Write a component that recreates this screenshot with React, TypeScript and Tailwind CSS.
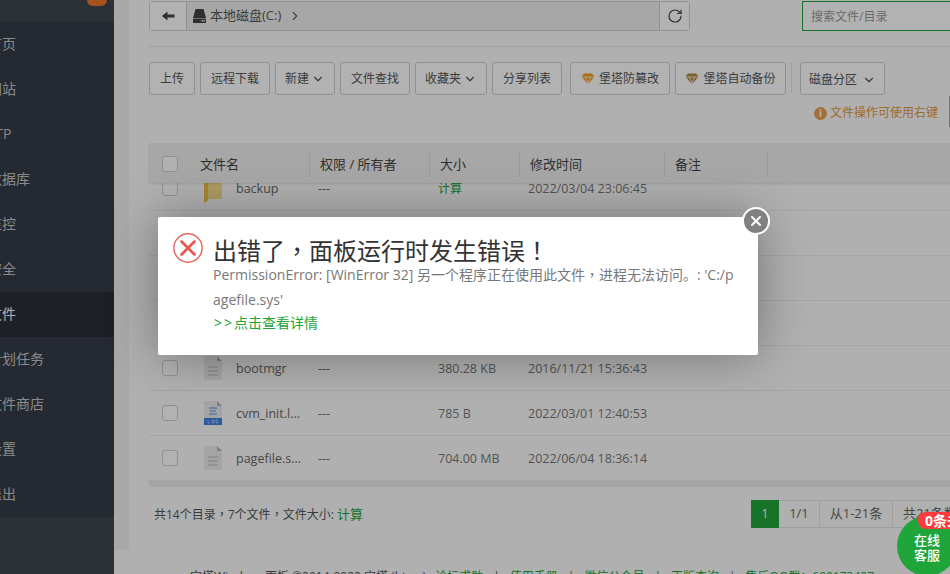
import React from "react";
import { ChevronDown, ChevronRight, RotateCw, X } from "lucide-react";

const font = "font-['Open_Sans','Noto_Sans_CJK_SC',sans-serif]";

const navItems = ["首页", "网站", "FTP", "数据库", "监控", "安全", "文件", "计划任务", "文件商店", "设置", "退出"];

function Btn({ children, className = "" }: { children: React.ReactNode; className?: string }) {
  return (
    <button className={`h-[33px] flex items-center justify-center shrink-0 border border-[#cfcfcf] rounded-[3px] bg-white text-[12px] text-[#555] ${className}`}>
      {children}
    </button>
  );
}

function Diamond({ color }: { color: string }) {
  return (
    <svg width="14" height="12" viewBox="0 0 14 12" className="mr-[4px] shrink-0">
      <path d="M3 0.5H11L13.5 3.5L7 11.5L0.5 3.5Z" fill={color} />
      <path d="M0.5 4H13.5M4.5 4L7 11M9.5 4L7 11" stroke="#fff" strokeWidth="0.8" fill="none" />
    </svg>
  );
}

function Folder() {
  return (
    <svg width="18" height="28" viewBox="0 0 18 28" className="overflow-visible">
      <path d="M4 0.5H18V23H4Z" fill="#fadf8c" />
      <path d="M0 5L4 3V23L4 24.5L0 27Z" fill="#eec14a" />
    </svg>
  );
}

function Doc() {
  return (
    <svg width="18" height="24" viewBox="0 0 18 24">
      <path d="M0 0H13L18 5V24H0Z" fill="#ebebeb" />
      <path d="M13 0L18 5H13Z" fill="#b5b5b5" />
      <path d="M4 11H14M4 15H14M4 19H14" stroke="#c9c9c9" strokeWidth="1.5" />
    </svg>
  );
}

function LogFile() {
  return (
    <svg width="18" height="24" viewBox="0 0 18 24">
      <path d="M0 0H13L18 5V24H0Z" fill="#ebebeb" />
      <path d="M13 0L18 5H13Z" fill="#b5b5b5" />
      <path d="M5 7H13M6 10H12M5 13H13" stroke="#5b8fe0" strokeWidth="1.2" />
      <rect x="0" y="17" width="18" height="7" fill="#3f7fe0" />
      <path d="M4 19V22H6M8 19H10V22H8ZM14 19H12V22H14V20.5" stroke="#cfe0ff" strokeWidth="0.6" fill="none" />
    </svg>
  );
}

function Row({ icon, name, size, date, sizeGreen }: { icon?: React.ReactNode; name?: string; size?: string; date?: string; sizeGreen?: boolean }) {
  return (
    <div className="h-[45px] shrink-0 flex items-center border-b border-[#ededed] text-[12.5px] text-[#777]">
      <div className="w-[16px] h-[16px] ml-[13px] rounded-[3px] border border-[#cfcfcf] bg-white" />
      <div className="w-[18px] ml-[26px] h-[24px] shrink-0">{icon}</div>
      <div className="w-[82px] ml-[14px] pt-[2px] text-[#666] whitespace-nowrap">{name}</div>
      <div className="w-[120px] pt-[2px] text-[#666]">{name ? "---" : ""}</div>
      <div className={`w-[90px] pt-[2px] ${sizeGreen ? "text-[#20a53a] text-[12px]" : "text-[#777]"}`}>{size}</div>
      <div className="w-[200px] pt-[2px] text-[#777]">{date}</div>
    </div>
  );
}

function HeadCell({ label, width }: { label: string; width: string }) {
  return (
    <div className={`${width} h-[25px] flex items-center shrink-0 text-[13px] text-[#444] border-r border-[#dcdcdc]`}>
      <span className="pl-[10px]">{label}</span>
    </div>
  );
}

function Comma() {
  return <span className="font-['Noto_Sans_CJK_TC']">，</span>;
}

function Sep() {
  return <span className="mx-[10px] text-[#555]">|</span>;
}

export default function App() {
  return (
    <div className={`relative w-[950px] h-[574px] overflow-hidden flex bg-[#fdfdfd] ${font}`}>
      {/* Sidebar */}
      <aside className="w-[114px] h-full shrink-0 flex flex-col bg-[#3f4550] overflow-hidden">
        <div className="h-[22px] shrink-0 relative">
          <div className="absolute left-[-2px] top-[-20px] text-[16px] font-semibold text-[#dddddd] whitespace-nowrap">Windows面板</div>
          <div className="absolute left-[87px] top-[-6px] w-[20px] h-[12px] rounded-b-[6px] bg-[#f0742a]" />
        </div>
        <nav className="flex flex-col">
          {navItems.map((n) => (
            <div
              key={n}
              className={`h-[45px] pb-[2px] flex items-center text-[14px] whitespace-nowrap ${n === "文件" ? "bg-[#2b2f36] text-white" : "bg-[#353b47] text-[#c6c6c6]"}`}
            >
              <span className="ml-[-12px]">{n}</span>
            </div>
          ))}
        </nav>
      </aside>

      {/* Main */}
      <div className="flex-1 min-w-0 flex flex-col">
        <div className="h-[550px] shrink-0 pl-[15px] bg-[#f2f2f2]">
          <div className="h-full bg-[#fdfdfd] pl-[20px] pt-[1px] overflow-hidden">
            {/* path bar */}
            <div className="flex h-[30px] w-[900px]">
              <div className="w-[541px] flex border border-[#d2d2d2] rounded-[3px] overflow-hidden">
                <div className="w-[37px] flex items-center justify-center border-r border-[#d2d2d2] bg-white">
                  <svg width="13" height="10" viewBox="0 0 13 10"><path d="M0 5L5.5 0.5V3.5H12.5V6.5H5.5V9.5Z" fill="#444" /></svg>
                </div>
                <div className="flex-1 flex items-center bg-[#f0f0f0] pl-[6px] text-[13px] text-[#555]">
                  <svg width="13" height="14" viewBox="0 0 13 14" className="mr-[4px]">
                    <path d="M2.5 0H10.5L13 9H0Z" fill="#444" />
                    <rect y="9.5" width="13" height="4.5" rx="0.5" fill="#444" />
                    <rect x="8.5" y="11" width="1.5" height="1.5" fill="#eee" />
                    <rect x="10.5" y="11" width="1.5" height="1.5" fill="#eee" />
                  </svg>
                  <span>本地磁盘(C:)</span>
                  <ChevronRight size={14} strokeWidth={2.2} className="ml-[7px] text-[#666]" />
                </div>
                <div className="w-[30px] flex items-center justify-center border-l border-[#d2d2d2] bg-white">
                  <RotateCw size={16} strokeWidth={1.8} className="text-[#444]" />
                </div>
              </div>
              <div className="ml-[112px] w-[200px] shrink-0 h-[30px] border border-[#20a53a] flex items-center pl-[8px] pt-[1px] text-[12px] text-[#999] bg-white">
                搜索文件/目录
              </div>
            </div>

            <div className="mt-[15px] h-px bg-[#e8e8e8] w-[900px]" />

            {/* toolbar */}
            <div className="mt-[15px] flex items-start w-[900px]">
              <Btn className="w-[46px]">上传</Btn>
              <Btn className="w-[70px] ml-[5px]">远程下载</Btn>
              <Btn className="w-[60px] ml-[5px]">新建<ChevronDown size={14} className="ml-[2px]" /></Btn>
              <Btn className="w-[70px] ml-[5px]">文件查找</Btn>
              <Btn className="w-[72px] ml-[5px]">收藏夹<ChevronDown size={14} className="ml-[2px]" /></Btn>
              <Btn className="w-[70px] ml-[5px]">分享列表</Btn>
              <Btn className="w-[100px] ml-[8px]"><Diamond color="#f0a020" />堡塔防篡改</Btn>
              <Btn className="w-[111px] ml-[5px]"><Diamond color="#b08a3c" />堡塔自动备份</Btn>
              <div className="w-px h-[31px] bg-[#e4e4e4] ml-[5px]" />
              <Btn className="w-[85px] ml-[8px] pt-[2px]">磁盘分区<ChevronDown size={14} className="ml-[5px]" /></Btn>
            </div>

            {/* tip */}
            <div className="mt-[9px] h-[18px] w-[789px] flex items-center justify-end text-[12px] text-[#e39a3e] whitespace-nowrap">
              <span className="w-[13px] h-[13px] mr-[3px] rounded-full bg-[#e8a04c] text-white text-[10px] font-bold flex items-center justify-center leading-none">i</span>
              文件操作可使用右键
            </div>

            {/* table */}
            <div className="mt-[21px] w-[900px]">
              <div className="relative h-[40px] pt-[9px] bg-[#f0f0f0] flex items-start shadow-[0_1px_2px_rgba(0,0,0,0.12)]">
                <div className="w-[16px] h-[16px] ml-[13px] mt-[4px] rounded-[3px] border border-[#cfcfcf] bg-white shrink-0" />
                <div className="w-[122px] ml-[10px] shrink-0 h-[25px] flex items-center border-r border-[#dcdcdc] text-[13px] text-[#444]">
                  <span className="pl-[12px]">文件名</span>
                </div>
                <HeadCell label="权限 / 所有者" width="w-[120px]" />
                <HeadCell label="大小" width="w-[90px]" />
                <HeadCell label="修改时间" width="w-[145px]" />
                <HeadCell label="备注" width="w-[103px]" />
              </div>
              <div className="h-[297px] overflow-hidden">
                <div className="-mt-[17px] flex flex-col">
                  <Row icon={<Folder />} name="backup" size="计算" date="2022/03/04 23:06:45" sizeGreen />
                  <Row />
                  <Row />
                  <Row />
                  <Row icon={<Doc />} name="bootmgr" size="380.28 KB" date="2016/11/21 15:36:43" />
                  <Row icon={<LogFile />} name="cvm_init.l..." size="785 B" date="2022/03/01 12:40:53" />
                  <Row icon={<Doc />} name="pagefile.s..." size="704.00 MB" date="2022/06/04 18:36:14" />
                </div>
              </div>
              <div className="h-[7px] bg-[#ececec]" />
            </div>

            {/* summary + pagination */}
            <div className="mt-[13px] h-[28px] flex items-center w-[900px] text-[13px]">
              <div className="w-[602px] pl-[5px] pt-[2px] text-[12px] text-[#555]">
                共14个目录<Comma />7个文件<Comma />文件大小: <span className="text-[13px] text-[#20a53a]">计算</span>
              </div>
              <div className="flex h-[28px] text-[#666] whitespace-nowrap">
                <div className="w-[28px] bg-[#20a53a] text-white flex items-center justify-center">1</div>
                <div className="w-[41px] flex items-center justify-center border-y border-r border-[#e6e6e6]">1/1</div>
                <div className="w-[73px] flex items-center justify-center border-y border-r border-[#e6e6e6]">从1-21条</div>
                <div className="px-[10px] flex items-center border-y border-[#e6e6e6]">共21条数据</div>
              </div>
            </div>
          </div>
        </div>

        {/* footer */}
        <div className="pt-[18px] text-center text-[12px] text-[#555] whitespace-nowrap">
          宝塔Windows面板 ©2014-2022 宝塔 (bt.cn) <span className="ml-[6px] text-[#20a53a]">论坛求助</span><Sep /><span className="text-[#20a53a]">使用手册</span><Sep /><span className="text-[#20a53a]">微信公众号</span><Sep /><span className="text-[#20a53a]">正版查询</span><Sep /><span className="text-[#20a53a]">售后QQ群：609173427</span>
        </div>
      </div>

      {/* Dim overlay */}
      <div className="absolute inset-0 bg-black/30" />

      {/* Error dialog */}
      <div className="absolute left-[158px] top-[217px] w-[600px] h-[138px] bg-white rounded-[2px] shadow-[0_0_50px_rgba(0,0,0,0.35)] flex pl-[15px] pt-[16px]">
        <svg width="30" height="30" viewBox="0 0 30 30" className="shrink-0">
          <circle cx="15" cy="15" r="14.2" fill="none" stroke="#e8645c" strokeWidth="1.4" />
          <path d="M8.5 8.5L21.5 21.5M21.5 8.5L8.5 21.5" stroke="#e8534b" strokeWidth="2.6" strokeLinecap="round" />
        </svg>
        <div className="ml-[10px] w-[526px]">
          <div className="text-[24px] leading-[34px] text-[#333] whitespace-nowrap">
            出错了<Comma />面板运行时发生错误<span className="font-['Noto_Sans_CJK_TC']">！</span>
          </div>
          <div className="text-[14px] leading-[25px] text-[#777] break-all -mt-[6px]">
            PermissionError: [WinError 32] 另一个程序正在使用此文件<Comma />进程无法访问。: &#39;C:/pagefile.sys&#39;
          </div>
          <div className="text-[14px] leading-[22px] text-[#20a53a]">
            <span className="ml-[1px] tracking-[2px]">&gt;&gt;</span>点击查看详情
          </div>
        </div>
      </div>

      {/* Close button */}
      <div className="absolute left-[742px] top-[207px] w-[28px] h-[28px] rounded-full bg-[#808080] border-[2px] border-white flex items-center justify-center">
        <X size={16} strokeWidth={3} className="text-white" />
      </div>

      {/* Edge line of clipped control */}
      <div className="absolute left-[949px] top-[96px] w-px h-[31px] bg-[#7a7a7a]" />

      {/* Online service widget */}
      <div className="absolute left-[897px] top-[516px] w-[60px] h-[60px] rounded-full bg-[#20a53a] flex flex-col items-center justify-center text-white text-[13px] font-medium leading-[15px] pt-[4px]">
        <span>在线</span>
        <span>客服</span>
      </div>
      <div className="absolute left-[918px] top-[512px] w-[64px] h-[17px] rounded-l-[8px] bg-[#ff3b3f] text-white text-[14px] font-bold leading-[18px] pl-[7px] whitespace-nowrap">
        0条未读
      </div>
    </div>
  );
}
